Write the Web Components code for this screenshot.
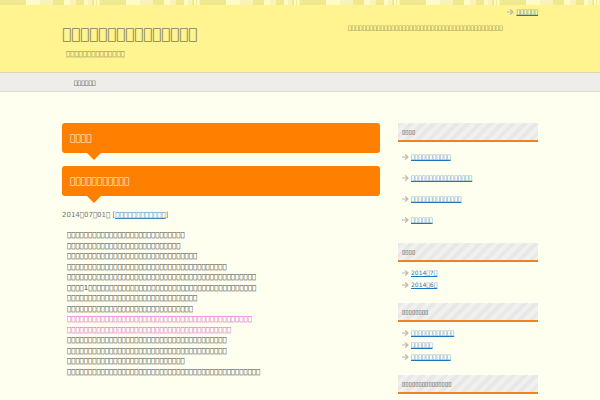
<!DOCTYPE html>
<html lang="ja">
<head>
<meta charset="utf-8">
<title>Blog</title>
<style>
body { margin: 0; background: #fffff0; color: #555; font-family: "DejaVu Sans", sans-serif; font-size: 7px; overflow: hidden; }
</style>
</head>
<body>
<blog-page></blog-page>
<script>
// The site's characters have no glyph in the UI font, so they show as boxes.
const t = n => '\ue9f5'.repeat(n);
const r = n => '\u25af'.repeat(n);

const define = (name, html) => customElements.define(name, class extends HTMLElement {
  constructor() {
    super();
    const tpl = document.createElement('template');
    tpl.innerHTML = html;
    this.attachShadow({ mode: 'open' }).append(tpl.content.cloneNode(true));
  }
});

define('arrow-link', `
<style>
:host { display: flex; align-items: center; gap: 2px; font: 6px/12px "DejaVu Sans", sans-serif; }
svg { width: 7px; height: 6px; flex: none; }
a { color: #1f74c2; text-decoration: underline; text-decoration-thickness: 1px; white-space: nowrap; }
</style>
<svg viewBox="0 0 7 6" fill="none" stroke="#bab8b0" stroke-width="1.2"><path d="M0 3H6M3 .4L6 3L3 5.6"/></svg>
<a href="#"><slot></slot></a>`);

define('site-header', `
<style>
:host { display: block; background: #fff48f; border-bottom: 1px solid #dcd6b0; padding-bottom: 12px; }
.strip { height: 5px; background: repeating-linear-gradient(90deg,
  #f0e88f 0 26px, #fffbc6 26px 40px, #f9f3ba 40px 53px, #f0e88f 53px 64px, #fffbc6 64px 70px,
  #f9f3ba 70px 76px, #f0e88f 76px 84px, #fffbc6 84px 88px, #f9f3ba 88px 92px, #f0e88f 92px 94px,
  #fffbc6 94px 96px, #f0e88f 96px 97px, #fffbc6 97px 99px, #f9f3ba 99px 100px); }
.in { width: 476px; max-width: 100%; margin: 0 auto; display: flex; justify-content: space-between; }
h1 { margin: 19px 0 0; font: 15px/20px "DejaVu Sans", sans-serif; color: #878258; }
p { margin: 0; }
.sub { padding: 4px 0 0 4px; font: 7px/12px "DejaVu Sans", sans-serif; color: #8b8658; }
.right { width: 190px; }
arrow-link { justify-content: flex-end; padding-top: 1px; }
.lead { padding-top: 5px; font: 6px/10px "DejaVu Sans", sans-serif; color: #777248; white-space: nowrap; }
</style>
<div class="strip"></div>
<div class="in">
  <div><h1>${t(15)}</h1><p class="sub">${t(14)}</p></div>
  <div class="right"><arrow-link>${t(6)}</arrow-link><p class="lead">${t(43)}</p></div>
</div>`);

define('site-nav', `
<style>
:host { display: block; background: #efedea; border-bottom: 1px solid #dedcd4; }
nav { width: 476px; max-width: 100%; margin: 0 auto; padding: 2px 12px 1px; box-sizing: border-box; display: flex; }
a { font: 6px/15px "DejaVu Sans", sans-serif; color: #222; text-decoration: none; }
</style>
<nav><a href="#">${t(6)}</a></nav>`);

define('balloon-title', `
<style>
:host { display: block; margin-bottom: 13px; background: #ff8000; border-radius: 3px; position: relative; }
h2 { margin: 0; padding: 7px 8px; font: 9px/16px "DejaVu Sans", sans-serif; color: #fff8ea; }
:host::after { content: ""; position: absolute; left: 24px; top: 100%; margin-top: -1px; border: 8px solid transparent; border-top-color: #ff8000; border-bottom: 0; }
</style>
<h2><slot></slot></h2>`);

define('blog-post', `
<style>
:host { display: block; }
.meta { margin: 0 0 9px; line-height: 12px; color: #70706a; }
a { color: #3d87c4; }
.text { margin: 0 5px; font: 7px/1.5 "DejaVu Sans", sans-serif; color: #44443f; white-space: nowrap; }
em { font-style: normal; color: #dd4fc6; }
</style>
<p class="meta">2014${t(1)}07${t(1)}01${t(1)} [<a href="#">${t(12)}</a>]</p>
<p class="text">${t(28)}<br>${t(27)}<br>${t(31)}<br>${t(38)}<br>${t(45)}<br>${t(4)}1${t(40)}<br>${t(31)}<br>${t(30)}<br>
<em>${t(44)}<br>${t(39)}</em><br>${t(38)}<br>${t(38)}<br>${t(28)}<br>${t(46)}</p>`);

define('side-box', `
<style>
:host { display: block; margin-bottom: 12px; }
h3 { margin: 0 0 5px; padding: 0 4px; font: 6px/17px "DejaVu Sans", sans-serif; color: #222; border-bottom: 2px solid #f08020;
  background: repeating-linear-gradient(135deg, #e8e8e8 0 4px, #f0f0ee 4px 8px); }
.list { display: grid; grid-auto-rows: var(--row, 12px); align-items: start; padding-left: 4px; }
::slotted(arrow-link) { padding-top: var(--lead, 0px); }
</style>
<h3><slot name="title"></slot></h3>
<div class="list"><slot></slot></div>`);

define('blog-page', `
<style>
:host { display: block; }
.cols { width: 476px; max-width: 100%; margin: 31px auto 0; display: grid; grid-template-columns: 1fr 140px; gap: 18px; }
.tall { --row: 21px; --lead: 4px; }
</style>
<site-header></site-header>
<site-nav></site-nav>
<div class="cols">
  <main>
    <balloon-title>${t(4)}</balloon-title>
    <balloon-title>${t(11)}</balloon-title>
    <blog-post></blog-post>
  </main>
  <aside>
    <side-box class="tall"><span slot="title">${r(4)}</span>
      <arrow-link>${t(11)}</arrow-link><arrow-link>${t(17)}</arrow-link><arrow-link>${t(14)}</arrow-link><arrow-link>${t(6)}</arrow-link></side-box>
    <side-box><span slot="title">${r(4)}</span>
      <arrow-link>2014${t(1)}7${t(1)}</arrow-link><arrow-link>2014${t(1)}6${t(1)}</arrow-link></side-box>
    <side-box><span slot="title">${r(8)}</span>
      <arrow-link>${t(12)}</arrow-link><arrow-link>${t(6)}</arrow-link><arrow-link>${t(11)}</arrow-link></side-box>
    <side-box><span slot="title">${r(15)}</span></side-box>
  </aside>
</div>`);
</script>
</body>
</html>
